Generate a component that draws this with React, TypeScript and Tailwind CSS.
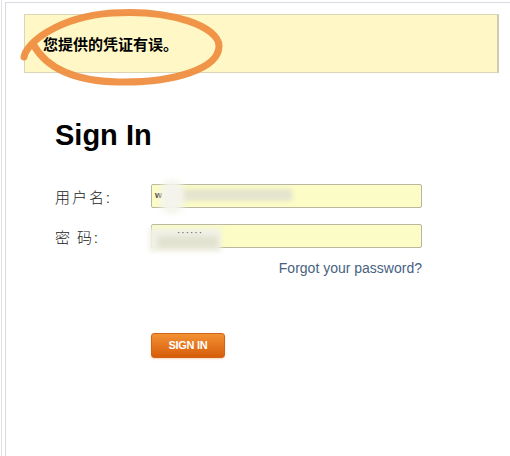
const ErrorCircle = () => (
  <svg
    className="absolute left-[-6px] top-[-4px] pointer-events-none"
    width="240"
    height="100"
    viewBox="0 0 240 100"
  >
    <path
      d="M 24 58 C 26 44, 58 18, 112 14 C 172 10, 219 28, 219 47 C 219 69, 176 84, 118 83 C 70 82, 45 67, 33 45"
      fill="none"
      stroke="#ef8b3d"
      strokeWidth="7"
      strokeLinecap="round"
      opacity="0.92"
    />
  </svg>
);

const App = () => {
  return (
    <div className="w-[510px] h-[456px] bg-white overflow-hidden font-['Liberation_Sans',Arial,sans-serif]">
      <div className="h-full ml-[1px] border-l border-[#e2e2e2] pl-[3px] pt-[2px]">
        <div className="relative h-full border-l border-t border-[#d6dce2] pl-[18px] pt-[11px]">
          {/* error notice */}
          <div className="relative w-[475px] h-[59px] bg-[#fff8c6] border border-[#d9d5b6] border-r-2 border-r-[#cfcbb0] flex items-center pl-[18px]">
            <span className="text-[15px] font-bold text-black font-['Noto_Sans_CJK_SC',sans-serif] leading-none">
              您提供的凭证有误。
            </span>
          </div>
          <ErrorCircle />

          <div className="ml-[31px]">
            <h1 className="mt-[48px] text-[29px] leading-none font-bold text-black">Sign In</h1>

            <div className="mt-[34px] flex flex-col gap-4 w-[367px]">
              <div className="flex items-center">
                <label className="w-[96px] text-[15px] tracking-[2px] text-[#222] font-light font-['Noto_Sans_CJK_SC',sans-serif] leading-none">
                  用户名:
                </label>
                <div className="relative w-[271px] h-[24px] bg-[#fbfcc6] border border-[#b8b8a2] rounded-[2px]">
                  <span className="absolute left-[3px] top-[6px] text-[9px] font-bold text-[#333] leading-none">w</span>
                  <div className="absolute left-[16px] top-[4px] w-[124px] h-[12px] bg-[#e4e4cf] blur-[2px]" />
                  <div className="absolute left-[8px] top-[-5px] w-[24px] h-[34px] bg-[#f4f4ec] blur-[3px] rounded-full" />
                </div>
              </div>
              <div className="flex items-center">
                <label className="w-[96px] text-[15px] tracking-[2px] text-[#222] font-light font-['Noto_Sans_CJK_SC',sans-serif] leading-none">
                  密<span className="ml-[5px]">码:</span>
                </label>
                <div className="relative w-[271px] h-[24px] bg-[#fbfcc6] border border-[#b8b8a2] rounded-[2px]">
                  <div className="absolute left-[-3px] top-[3px] w-[72px] h-[24px] bg-[#f1f1e6] blur-[2px]" />
                  <div className="absolute left-[6px] top-[11px] w-[60px] h-[12px] bg-[#e2e2d0] blur-[2px]" />
                  <span className="absolute left-[25px] top-[3px] text-[10px] text-[#555] leading-none tracking-[1px]">······</span>
                </div>
              </div>
            </div>

            <div className="w-[367px] flex justify-end mt-[12px]">
              <a className="text-[14px] leading-4 text-[#47627f]">Forgot your password?</a>
            </div>

            <button className="mt-[57px] ml-[96px] w-[74px] h-[25px] rounded-[3px] bg-gradient-to-b from-[#f39132] to-[#d65d06] border border-[#d0641a] text-white text-[11px] font-bold tracking-tight shadow-[0_1px_2px_rgba(240,140,60,0.35)]">
              SIGN IN
            </button>
          </div>
        </div>
      </div>
    </div>
  );
};

export default App;
